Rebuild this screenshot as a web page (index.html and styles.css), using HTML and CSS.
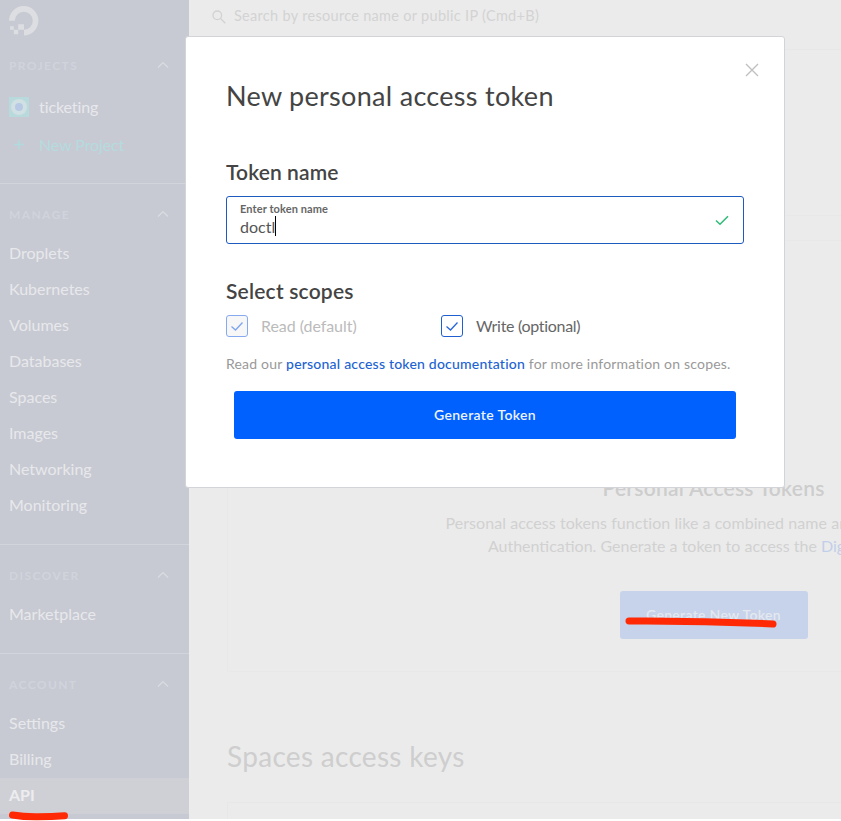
FILE: index.html
```html
<!DOCTYPE html>
<html lang="en">
<head>
<meta charset="utf-8">
<title>API</title>
<link rel="stylesheet" href="styles.css">
</head>
<body>
<div class="app">
  <nav class="sidebar">
    <svg class="logo" width="30" height="30" viewBox="0 0 30 30"><path d="M15 29.500V23.700A9 9 0 1 0 5.800 14.800H0A14.700 14.700 0 1 1 15 29.500Z"/><path d="M9.200 18.200H15V23.700H9.200ZM4.800 23.700H9.200V28.200H4.800ZM1.100 20.200H4.800V23.700H1.100Z"/></svg>
    <section class="group projects">
      <h2 class="group-head"><span>PROJECTS</span><svg class="chev" width="12" height="8" viewBox="0 0 12 8"><path d="M1 6.500L6 1.500L11 6.500"/></svg></h2>
      <a class="project"><svg width="20" height="20" viewBox="0 0 20 20"><rect width="20" height="20" fill="#b9dadc"/><circle cx="10" cy="10" r="8" fill="#d0e0e3"/><circle cx="10" cy="10" r="4" fill="#b8c9e6"/></svg><span>ticketing</span></a>
      <a class="project new"><svg width="20" height="20" viewBox="0 0 20 20"><path d="M5 9.500H15M10 4.500V14.500" stroke="#b0dadd" stroke-width="1.4"/></svg><span>New Project</span></a>
    </section>
    <section class="group">
      <h2 class="group-head"><span>MANAGE</span><svg class="chev" width="12" height="8" viewBox="0 0 12 8"><path d="M1 6.500L6 1.500L11 6.500"/></svg></h2>
      <a class="item">Droplets</a>
      <a class="item">Kubernetes</a>
      <a class="item">Volumes</a>
      <a class="item">Databases</a>
      <a class="item">Spaces</a>
      <a class="item">Images</a>
      <a class="item">Networking</a>
      <a class="item">Monitoring</a>
    </section>
    <section class="group">
      <h2 class="group-head"><span>DISCOVER</span><svg class="chev" width="12" height="8" viewBox="0 0 12 8"><path d="M1 6.500L6 1.500L11 6.500"/></svg></h2>
      <a class="item">Marketplace</a>
    </section>
    <section class="group">
      <h2 class="group-head"><span>ACCOUNT</span><svg class="chev" width="12" height="8" viewBox="0 0 12 8"><path d="M1 6.500L6 1.500L11 6.500"/></svg></h2>
      <a class="item">Settings</a>
      <a class="item">Billing</a>
      <a class="item active">API</a>
    </section>
  </nav>
  <main class="main">
    <header class="topbar">
      <svg width="14" height="14" viewBox="0 0 14 14"><circle cx="5.300" cy="5.300" r="4.300"/><path d="M8.500 8.500L13.300 13.300"/></svg>
      <span>Search by resource name or public IP (Cmd+B)</span>
    </header>
    <div class="tabs"></div>
    <div class="strip"></div>
    <section class="card">
      <h3 class="card-title">Personal Access Tokens</h3>
      <p class="card-text">Personal access tokens function like a combined name and password for API</p>
      <p class="card-text second">Authentication. Generate a token to access the <a>DigitalOcean API</a>.</p>
      <button class="card-btn">Generate New Token</button>
    </section>
    <h2 class="keys-title">Spaces access keys</h2>
    <section class="keys-card"></section>
  </main>
</div>
<svg class="marks" width="841" height="821" viewBox="0 0 841 821"><path d="M12.500 815Q24 817 38 816.800T64.500 815.800"/><path d="M629 621Q700 620.500 773 624"/></svg>
<div class="modal">
  <svg class="close" width="14" height="14" viewBox="0 0 14 14"><path d="M1 1L13 13M13 1L1 13"/></svg>
  <h1 class="title">New personal access token</h1>
  <h2 class="label name">Token name</h2>
  <div class="field">
    <div class="field-text">
      <label class="hint">Enter token name</label>
      <div class="value"><span>doctl</span><i class="caret"></i></div>
    </div>
    <svg width="14" height="11" viewBox="0 0 14 11"><path d="M1 5.500L5 9.300L13 1.300"/></svg>
  </div>
  <h2 class="label scopes">Select scopes</h2>
  <div class="checks">
    <label class="check off"><span class="box"><svg width="14" height="11" viewBox="0 0 14 11"><path d="M1.500 5.500L5.500 9L12.500 1.500"/></svg></span><span class="check-text">Read (default)</span></label>
    <label class="check write"><span class="box"><svg width="14" height="11" viewBox="0 0 14 11"><path d="M1.500 5.500L5.500 9L12.500 1.500"/></svg></span><span class="check-text">Write (optional)</span></label>
  </div>
  <p class="docs">Read our <a>personal access token documentation</a> for more information on scopes.</p>
  <button class="generate">Generate Token</button>
</div>
</body>
</html>
```
FILE: styles.css
```css
* { box-sizing: border-box; }
body { margin: 0; width: 841px; height: 821px; overflow: hidden; position: relative; background: #fff; font-family: Lato, "Open Sans", sans-serif; }
h1, h2, h3, p { margin: 0; }
button { border: 0; padding: 0 0 2px; font-family: inherit; }
svg { display: block; flex: none; }
.app { display: flex; height: 819px; overflow: hidden; }

.sidebar { width: 189px; flex: none; background: #c7cad3; }
.logo { margin: 6px 0 0 9px; fill: #dcdee1; }
.group { border-top: 1px solid #d3d5dc; padding: 20px 0 20px; }
.group.projects { border: 0; padding: 19px 0 19px; }
.projects .group-head { margin-bottom: 13px; }
.group-head { display: flex; justify-content: space-between; align-items: center; height: 20px; margin-bottom: 12px; padding: 0 20px 0 9px; font-size: 12px; font-weight: 700; letter-spacing: 1.4px; color: #d1d3dc; }
.chev { fill: none; stroke: #dadce1; stroke-width: 1.2; }
.project { display: flex; align-items: center; gap: 10px; height: 38px; padding-left: 9px; font-size: 16px; letter-spacing: -0.1px; color: #e7e8ec; }
.project span { padding-bottom: 2px; }
.project.new { color: #b5dbde; }
.item { display: flex; align-items: center; height: 36px; padding: 0 0 3px 9px; font-size: 16px; color: #e7e8eb; }
.item.active { background: #cfd0d6; font-weight: 700; color: #ededef; }

.main { flex: 1; min-width: 0; overflow: hidden; background: #ebebeb; }
.topbar { display: flex; align-items: center; gap: 8px; height: 50px; padding: 0 0 18px 23px; border-bottom: 1px solid #e7e7e7; font-size: 14.5px; letter-spacing: 0.3px; color: #d3d3d3; }
.topbar svg { margin-top: 3px; fill: none; stroke: #d2d2d2; stroke-width: 1.3; }
.tabs { height: 166px; border-bottom: 1px solid #e8e8e8; }
.strip { height: 25px; border-bottom: 1px solid #e8e8e8; }
.card { display: flex; flex-direction: column; align-items: center; width: 973px; height: 431px; margin-left: 38px; padding-top: 159px; border: 1px solid #e8e8e8; border-top: 0; border-radius: 3px; }
.card-title { margin-top: 75px; line-height: 26px; font-size: 21px; font-weight: 600; letter-spacing: 0.25px; color: #cdcdcd; }
.card-text { line-height: 23px; font-size: 16px; letter-spacing: 0.06px; color: #d1d1d1; }
.card-title + .card-text { margin-top: 10px; }
.second { letter-spacing: 0; padding-left: 5px; }
.card-text a { color: #c2cfe9; }
.card-btn { width: 188px; height: 48px; margin-top: 34px; border-radius: 3px; background: #c6d3ea; color: #e4e8ef; font-size: 14px; font-weight: 600; letter-spacing: 0.3px; }
.keys-title { margin: 66px 0 0 38px; line-height: 36px; font-size: 28px; font-weight: 400; letter-spacing: 0.3px; color: #cecece; }
.keys-card { width: 975px; height: 60px; margin: 28px 0 0 38px; border: 1px solid #e7e7e7; }

.marks { position: absolute; inset: 0; fill: none; stroke: #ff2a05; stroke-width: 7; stroke-linecap: round; }

.modal { position: absolute; left: 185px; top: 36px; width: 600px; height: 452px; padding: 0 40px; background: #fff; border: 1px solid #d3d4d8; border-radius: 3px; color: #444; }
.close { position: absolute; top: 26px; right: 25px; fill: none; stroke: #c0c0c0; stroke-width: 1.4; }
.title { margin-top: 41px; line-height: 36px; font-size: 27px; font-weight: 400; letter-spacing: 0.3px; color: #444; }
.label { line-height: 26px; font-size: 21px; font-weight: 600; letter-spacing: 0.1px; color: #444; }
.name { margin-top: 45px; }
.field { display: flex; align-items: center; justify-content: space-between; width: 518px; height: 48px; margin-top: 11px; padding: 0 14px 0 13px; border: 1px solid #1d5bbf; border-radius: 3px; }
.field > svg { fill: none; stroke: #2dbb76; stroke-width: 1.5; }
.field-text { padding-bottom: 2px; }
.hint { display: block; line-height: 14px; font-size: 11px; font-weight: 700; letter-spacing: 0.1px; color: #666; }
.value { display: flex; align-items: center; height: 20px; font-size: 16px; color: #555; }
.caret { width: 1px; height: 20px; background: #000; }
.scopes { margin-top: 34px; letter-spacing: 0.2px; }
.checks { display: flex; margin-top: 11px; }
.check { display: flex; align-items: center; gap: 13px; width: 215px; height: 22px; font-size: 16px; color: #666; }
.check-text { padding-bottom: 2px; }
.off .check-text { letter-spacing: -0.05px; }
.write { letter-spacing: -0.3px; }
.box { display: grid; place-items: center; width: 22px; height: 22px; border: 1px solid #1f5fd0; border-radius: 3px; }
.box svg { fill: none; stroke: #2a66d9; stroke-width: 1.3; }
.off { color: #bbb; }
.off .box { border-color: #86aaf0; background: #f7f7f7; }
.off .box svg { stroke: #7da4ef; }
.docs { margin-top: 17px; line-height: 20px; font-size: 14px; letter-spacing: 0.2px; color: #999; white-space: pre; }
.docs a { color: #2163d2; font-weight: 500; letter-spacing: 0.22px; }
.generate { display: block; width: 502px; height: 48px; margin: 17px 0 0 8px; border-radius: 3px; background: #0061ff; color: #eef4ff; font-size: 14px; font-weight: 600; letter-spacing: 0.35px; }
```
